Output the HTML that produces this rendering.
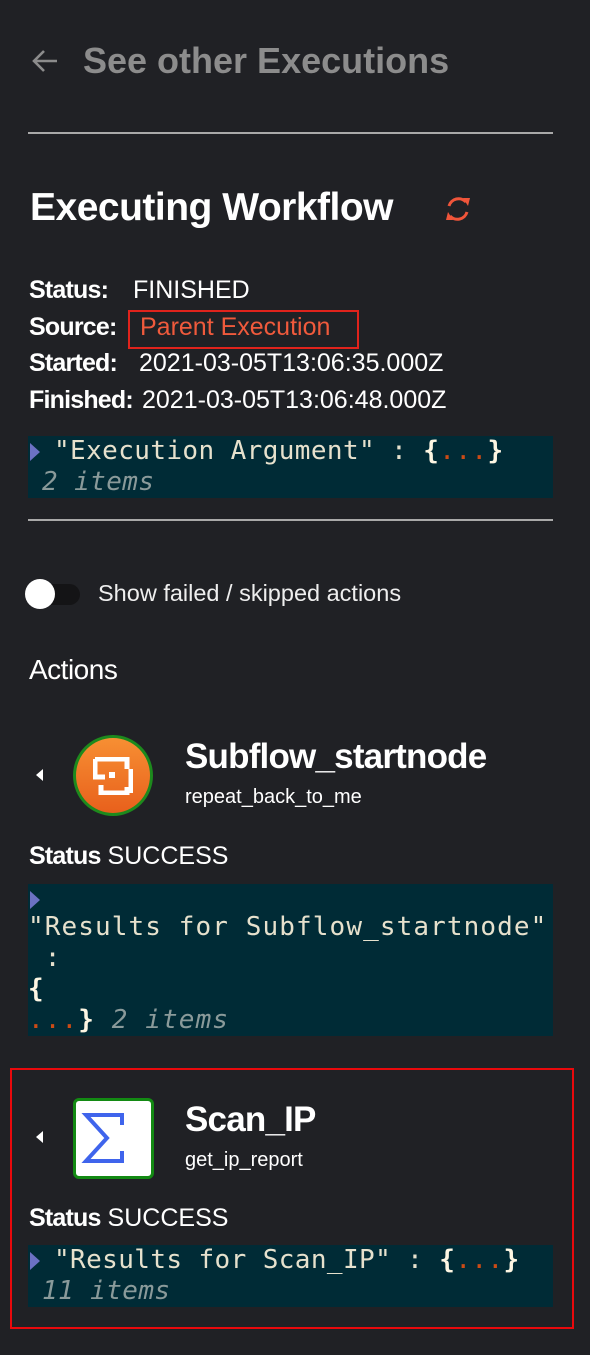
<!DOCTYPE html>
<html><head><meta charset="utf-8"><style>
*{margin:0;padding:0;box-sizing:border-box}
body{width:590px;height:1355px;background:#202125;font-family:"Liberation Sans",sans-serif;color:#fff;position:relative;overflow:hidden}
.a{position:absolute;white-space:nowrap}
.hr{position:absolute;left:28px;width:525px;height:2px;background:#a9a9a9}
.lbl{font-size:25px;line-height:30px}
.lbl b{font-weight:bold;letter-spacing:-0.8px}
.json{position:absolute;left:28px;width:525px;background:#002b36;font-family:"DejaVu Sans Mono","Liberation Mono",monospace;font-size:26px;letter-spacing:1.1px;color:#e6e1cd;line-height:31px}
.tri{display:inline-block;width:0;height:0;border-top:9px solid transparent;border-bottom:9px solid transparent;border-left:10px solid #6c71c4;vertical-align:middle;margin:0 14px 0 2px}
.it{color:#8a9a9a;font-style:italic}
.dots{color:#cb4b16}
.br{color:#fdf6e3;font-weight:bold}
.caret{position:absolute;width:0;height:0;border-top:6px solid transparent;border-bottom:6px solid transparent;border-right:7px solid #fff}
</style></head><body>
<svg class="a" style="left:30px;top:48px" width="30" height="26" viewBox="0 0 30 26"><path d="M27 13H5M14 3L4 13l10 10" stroke="#8c8c8c" stroke-width="2.6" fill="none"/></svg>
<div class="a" style="left:83px;top:40px;font-size:36px;font-weight:bold;color:#8c8c8c">See other Executions</div>
<div class="hr" style="top:132px"></div>
<div class="a" style="left:30px;top:186px;font-size:39px;font-weight:bold;letter-spacing:-0.5px">Executing Workflow</div>
<svg class="a" style="left:441px;top:194px" width="34" height="30" viewBox="0 0 34 30"><g stroke="#f0553a" stroke-width="3" fill="none"><path d="M8 12a10 10 0 0 1 17-4"/><path d="M26 18a10 10 0 0 1-17 4"/></g><path d="M22 4l7 0l-2 8z" fill="#f0553a"/><path d="M12 26l-7 0l2-8z" fill="#f0553a"/></svg>
<div class="a lbl" style="left:29px;top:275px"><b>Status:</b></div><div class="a lbl" style="left:133px;top:275px">FINISHED</div>
<div class="a lbl" style="left:29px;top:312px"><b>Source:</b></div>
<div class="a" style="left:128px;top:310px;width:231px;height:39px;border:2px solid #e0231c"></div>
<div class="a lbl" style="left:140px;top:312px;color:#f05a3c">Parent Execution</div>
<div class="a lbl" style="left:29px;top:348px"><b>Started:</b></div><div class="a lbl" style="left:139px;top:348px">2021-03-05T13:06:35.000Z</div>
<div class="a lbl" style="left:29px;top:385px"><b>Finished:</b></div><div class="a lbl" style="left:142px;top:385px">2021-03-05T13:06:48.000Z</div>
<div class="json" style="top:436px;height:62px;letter-spacing:0.4px"><div><span class="tri"></span>"Execution Argument" : <span class="br">{</span><span class="dots">...</span><span class="br">}</span></div><div class="it" style="padding-left:14px">2 items</div></div>
<div class="hr" style="top:519px"></div>
<div class="a" style="left:25px;top:584px;width:55px;height:21px;border-radius:11px;background:#141416"></div>
<div class="a" style="left:25px;top:579px;width:30px;height:30px;border-radius:50%;background:#fff"></div>
<div class="a" style="left:98px;top:580px;font-size:23.5px;color:#eee">Show failed / skipped actions</div>
<div class="a" style="left:29px;top:654px;font-size:28px;letter-spacing:-0.5px">Actions</div>
<div class="caret" style="left:36px;top:769px"></div>
<div class="a" style="left:73px;top:735px;width:80px;height:81px;border-radius:50%;background:linear-gradient(#f78f33,#e8601c);border:3px solid #1d8a1d"></div>
<svg class="a" style="left:93px;top:757px" width="40" height="38" viewBox="0 0 40 38"><path d="M2 2h32v10M2 2v18h10M34 30v6H8v-8M38 12v24" stroke="#fff" stroke-width="5" fill="none"/><rect x="16" y="15" width="6" height="6" fill="#fff"/></svg>
<div class="a" style="left:185px;top:737px;font-size:35px;font-weight:bold;letter-spacing:-0.8px">Subflow_startnode</div>
<div class="a" style="left:185px;top:786px;font-size:20px">repeat_back_to_me</div>
<div class="a lbl" style="left:29px;top:841px"><b>Status</b> SUCCESS</div>
<div class="json" style="top:884px;height:152px"><div style="height:28px"><span class="tri"></span></div><div>"Results for Subflow_startnode"</div><div>&nbsp;:</div><div class="br">{</div><div><span class="dots">...</span><span class="br">}</span> <span class="it">2 items</span></div></div>
<div class="a" style="left:10px;top:1068px;width:564px;height:261px;border:2px solid #e8090c"></div>
<div class="caret" style="left:36px;top:1131px"></div>
<div class="a" style="left:73px;top:1098px;width:81px;height:81px;border-radius:6px;background:#fff;border:3px solid #138a13"></div>
<svg class="a" style="left:76px;top:1101px" width="75" height="75" viewBox="0 0 75 75"><path d="M46 24V14H10L31 37L10 60H46V50" fill="none" stroke="#3f64ec" stroke-width="4"/></svg>
<div class="a" style="left:185px;top:1100px;font-size:35px;font-weight:bold;letter-spacing:-0.8px">Scan_IP</div>
<div class="a" style="left:185px;top:1149px;font-size:20px">get_ip_report</div>
<div class="a lbl" style="left:29px;top:1203px"><b>Status</b> SUCCESS</div>
<div class="json" style="top:1245px;height:62px;letter-spacing:0.4px"><div><span class="tri"></span>"Results for Scan_IP" : <span class="br">{</span><span class="dots">...</span><span class="br">}</span></div><div class="it" style="padding-left:14px">11 items</div></div>
</body></html>
